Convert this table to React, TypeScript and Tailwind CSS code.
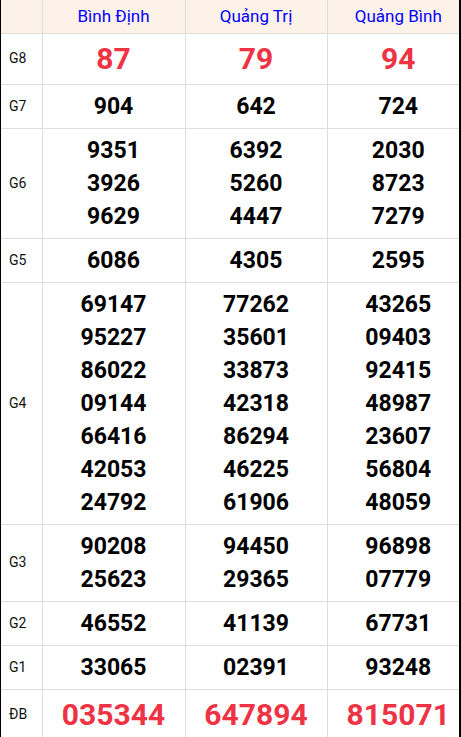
import React from 'react';

type Row = { label: string; values: string[][]; big?: boolean; red?: boolean };

const rows: Row[] = [
  { label: 'G8', values: [['87'], ['79'], ['94']], big: true, red: true },
  { label: 'G7', values: [['904'], ['642'], ['724']] },
  { label: 'G6', values: [['9351', '3926', '9629'], ['6392', '5260', '4447'], ['2030', '8723', '7279']] },
  { label: 'G5', values: [['6086'], ['4305'], ['2595']] },
  {
    label: 'G4',
    values: [
      ['69147', '95227', '86022', '09144', '66416', '42053', '24792'],
      ['77262', '35601', '33873', '42318', '86294', '46225', '61906'],
      ['43265', '09403', '92415', '48987', '23607', '56804', '48059'],
    ],
  },
  { label: 'G3', values: [['90208', '25623'], ['94450', '29365'], ['96898', '07779']] },
  { label: 'G2', values: [['46552'], ['41139'], ['67731']] },
  { label: 'G1', values: [['33065'], ['02391'], ['93248']] },
  { label: 'ĐB', values: [['035344'], ['647894'], ['815071']], big: true, red: true },
];

const provinces = ['Bình Định', 'Quảng Trị', 'Quảng Bình'];

export default function App() {
  return (
    <div className="w-[461px] bg-white" style={{ fontFamily: 'Roboto, "Noto Sans", sans-serif' }}>
      <div className="border-l border-r-2 border-b-2 border-black">
        <table className="w-full table-fixed border-collapse">
          <colgroup>
            <col className="w-[41px]" />
            <col className="w-[143px]" />
            <col className="w-[142px]" />
            <col />
          </colgroup>
          <thead>
            <tr className="bg-[#fdf2e7] h-[33px]">
              <th className="border-r border-b border-[#dddddd]"></th>
              {provinces.map((p, i) => (
                <th
                  key={p}
                  className={`border-b border-[#dddddd] text-[17px] leading-[20px] font-normal text-[#0000ff] ${i < 2 ? 'border-r' : 'pl-[10px]'}`}
                >
                  {p}
                </th>
              ))}
            </tr>
          </thead>
          <tbody>
            {rows.map((r, ri) => (
              <tr key={r.label}>
                <td className={`text-[14px] text-[#111] pl-[8px] border-r border-[#dddddd] ${ri < rows.length - 1 ? 'border-b' : ''}`}>
                  {r.label}
                </td>
                {r.values.map((v, ci) => (
                  <td
                    key={ci}
                    className={`text-center font-bold border-[#dddddd] ${ri < rows.length - 1 ? 'border-b' : ''} ${ci < 2 ? 'border-r' : 'pl-[10px]'} ${
                      r.big ? 'py-[3px]' : 'py-[5px]'
                    }`}
                  >
                    {v.map((n, k) => (
                      <div
                        key={k}
                        className={
                          r.big
                            ? 'text-[30px] leading-[44px] text-[#ee3344]'
                            : 'text-[23px] leading-[33px] text-black'
                        }
                      >
                        {n}
                      </div>
                    ))}
                  </td>
                ))}
              </tr>
            ))}
          </tbody>
        </table>
      </div>
    </div>
  );
}
